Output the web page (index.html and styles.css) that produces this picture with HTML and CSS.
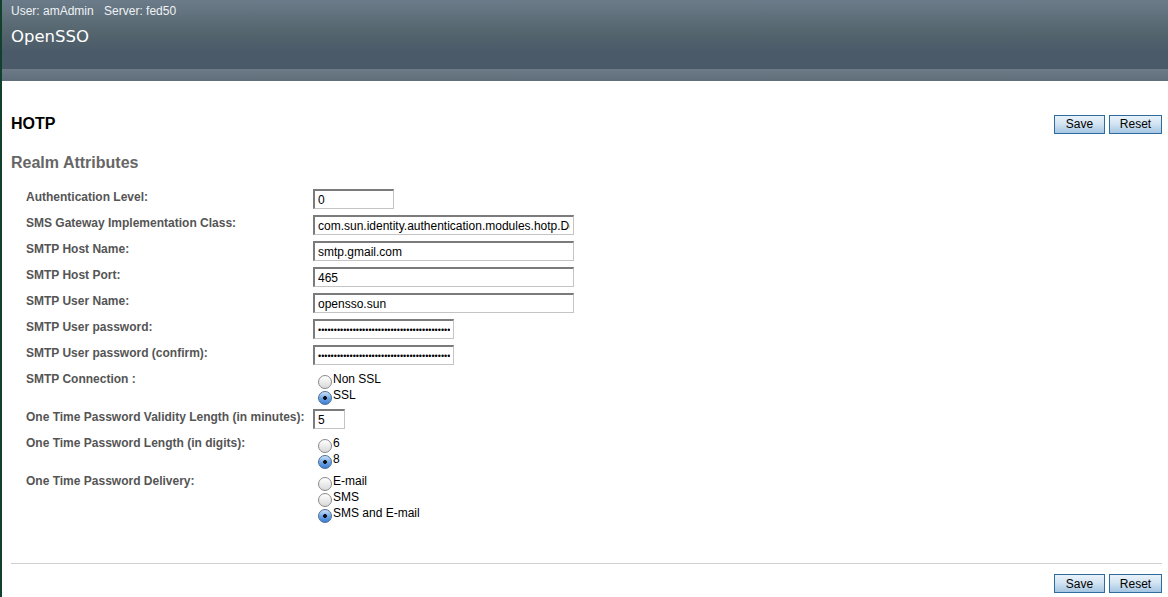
FILE: index.html
```html
<!DOCTYPE html>
<html lang="en">
<head>
    <meta charset="UTF-8">
    <title>OpenSSO - HOTP</title>
    <link rel="stylesheet" href="styles.css">
</head>
<body>
    <div class="page">
        <div class="masthead">
            <div class="user-info">
                <span>User: amAdmin</span>
                <span>Server: fed50</span>
            </div>
            <div class="product-name">OpenSSO</div>
        </div>
        <div class="subbar"></div>

        <div class="content">
            <div class="title-row">
                <h1>HOTP</h1>
                <div class="buttons">
                    <button class="btn btn-save">Save</button>
                    <button class="btn btn-reset">Reset</button>
                </div>
            </div>

            <h2>Realm Attributes</h2>

            <div class="fields">
                <div class="field">
                    <label>Authentication Level:</label>
                    <div><input type="text" class="w-small" value="0"></div>
                </div>
                <div class="field">
                    <label>SMS Gateway Implementation Class:</label>
                    <div><input type="text" class="w-wide" value="com.sun.identity.authentication.modules.hotp.DefaultSMSGatewayImpl"></div>
                </div>
                <div class="field">
                    <label>SMTP Host Name:</label>
                    <div><input type="text" class="w-wide" value="smtp.gmail.com"></div>
                </div>
                <div class="field">
                    <label>SMTP Host Port:</label>
                    <div><input type="text" class="w-wide" value="465"></div>
                </div>
                <div class="field">
                    <label>SMTP User Name:</label>
                    <div><input type="text" class="w-wide" value="opensso.sun"></div>
                </div>
                <div class="field">
                    <label>SMTP User password:</label>
                    <div><input type="password" class="w-pass" value="passwordpasswordpasswordpasswordpassword1234567890"></div>
                </div>
                <div class="field">
                    <label>SMTP User password (confirm):</label>
                    <div><input type="password" class="w-pass" value="passwordpasswordpasswordpasswordpassword1234567890"></div>
                </div>
                <div class="field">
                    <label>SMTP Connection :</label>
                    <div class="radios">
                        <label class="radio"><input type="radio" name="conn">Non SSL</label>
                        <label class="radio"><input type="radio" name="conn" checked>SSL</label>
                    </div>
                </div>
                <div class="field">
                    <label>One Time Password Validity Length (in minutes):</label>
                    <div><input type="text" class="w-tiny" value="5"></div>
                </div>
                <div class="field">
                    <label>One Time Password Length (in digits):</label>
                    <div class="radios">
                        <label class="radio"><input type="radio" name="digits">6</label>
                        <label class="radio"><input type="radio" name="digits" checked>8</label>
                    </div>
                </div>
                <div class="field">
                    <label>One Time Password Delivery:</label>
                    <div class="radios">
                        <label class="radio"><input type="radio" name="delivery">E-mail</label>
                        <label class="radio"><input type="radio" name="delivery">SMS</label>
                        <label class="radio"><input type="radio" name="delivery" checked>SMS and E-mail</label>
                    </div>
                </div>
            </div>

            <div class="footer">
                <div class="buttons">
                    <button class="btn btn-save">Save</button>
                    <button class="btn btn-reset">Reset</button>
                </div>
            </div>
        </div>
    </div>
</body>
</html>
```

FILE: styles.css
```css
body {
    margin: 0;
    font-family: 'Liberation Sans', Arial, sans-serif;
    font-size: 12px;
    background: white;
}
.page {
    border-left: 2px solid #11402c;
    min-height: 100vh;
    box-sizing: border-box;
}
.masthead {
    height: 69px;
    padding: 0 9px;
    box-sizing: border-box;
    background: linear-gradient(to bottom, #6b7b89 0%, #56666f 45%, #4a5a68 75%, #4a5a68 100%);
}
.user-info {
    padding-top: 4px;
    line-height: 14px;
    color: #eef2f5;
}
.user-info span + span {
    margin-left: 7px;
}
.product-name {
    margin-top: 8px;
    font-family: 'DejaVu Sans', sans-serif;
    font-size: 16.5px;
    line-height: 22px;
    color: white;
}
.subbar {
    height: 12px;
    background: linear-gradient(to bottom, #6d7b88, #606e7a);
}
.content {
    padding: 0 6px 0 9px;
}
.title-row {
    display: flex;
    justify-content: space-between;
    align-items: center;
    margin-top: 33px;
}
h1 {
    margin: 0;
    font-size: 16px;
    line-height: 20px;
    color: #000;
}
h2 {
    margin: 19px 0 0 0;
    font-size: 16px;
    line-height: 20px;
    color: #666;
}
.buttons {
    display: flex;
    gap: 4px;
}
.btn {
    height: 19px;
    padding: 0;
    font-family: 'Liberation Sans', Arial, sans-serif;
    font-size: 12px;
    color: #000;
    border: 1px solid #2f6b9c;
    background: linear-gradient(to bottom, #e9f2fa 0%, #d3e4f2 45%, #a5c6e3 100%);
    cursor: pointer;
}
.btn-save {
    width: 51px;
}
.btn-reset {
    width: 53px;
}
.fields {
    margin: 16px 0 0 15px;
}
.field {
    display: grid;
    grid-template-columns: 287px auto;
    margin-bottom: 6px;
}
.field > label {
    font-weight: bold;
    color: #555;
    line-height: 16px;
}
input[type=text],
input[type=password] {
    display: block;
    height: 20px;
    box-sizing: border-box;
    margin: 0;
    padding: 0 3px;
    font-family: 'Liberation Sans', Arial, sans-serif;
    font-size: 12px;
    color: #000;
    border-style: solid;
    border-width: 2px 1px 1px 2px;
    border-color: #7b7b7b #c4c4c4 #c4c4c4 #7b7b7b;
    outline: none;
}
input[type=password] {
    font-size: 9px;
    letter-spacing: 0;
}
.w-small {
    width: 81px;
}
.w-wide {
    width: 261px;
}
.w-pass {
    width: 141px;
}
.w-tiny {
    width: 32px;
}
.radios {
    display: flex;
    flex-direction: column;
}
.radio {
    display: block;
    line-height: 16px;
    height: 16px;
    color: #000;
}
.radio input {
    appearance: none;
    -webkit-appearance: none;
    width: 14px;
    height: 14px;
    margin: 0 1px 0 5px;
    vertical-align: -6px;
    border: 1px solid #8a8a8a;
    border-radius: 50%;
    box-sizing: border-box;
    background: linear-gradient(to bottom, #ffffff, #d9d9d9);
}
.radio input:checked {
    border-color: #4a6d96;
    background:
        radial-gradient(circle, #111 0 1.6px, transparent 2.2px),
        linear-gradient(to bottom, #cfe2f8 0%, #6aa4e6 55%, #3e7fd4 100%);
}
.footer {
    margin-top: 42px;
    border-top: 1px solid #d0d0d0;
    padding-top: 10px;
    display: flex;
    justify-content: flex-end;
}
```
